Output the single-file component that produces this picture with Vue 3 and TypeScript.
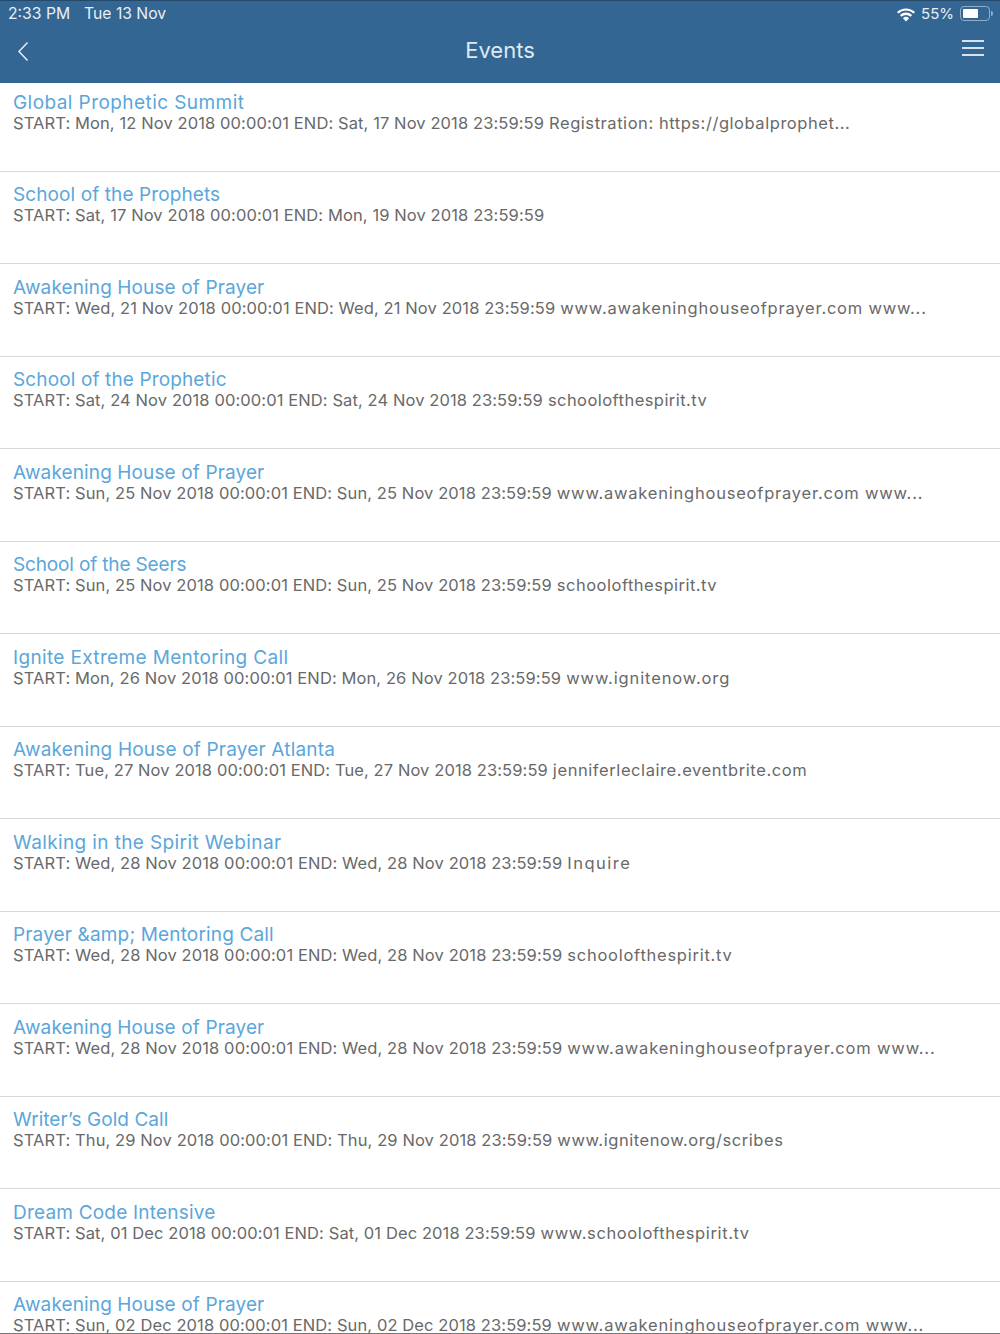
<script setup lang="ts">
interface EventRow {
  title: string;
  when: string;
  extra: string;
  titleTrack: number; // 标题字距
  extraTrack: number; // 链接字距
}

const events: EventRow[] = [
  { title: "Global Prophetic Summit", when: "START: Mon, 12 Nov 2018 00:00:01 END: Sat, 17 Nov 2018 23:59:59", extra: "Registration: https://globalprophet...", titleTrack: 0.43, extraTrack: 0.55 },
  { title: "School of the Prophets", when: "START: Sat, 17 Nov 2018 00:00:01 END: Mon, 19 Nov 2018 23:59:59", extra: "", titleTrack: 0.1, extraTrack: 0 },
  { title: "Awakening House of Prayer", when: "START: Wed, 21 Nov 2018 00:00:01 END: Wed, 21 Nov 2018 23:59:59", extra: "www.awakeninghouseofprayer.com www...", titleTrack: 0.12, extraTrack: 0.78 },
  { title: "School of the Prophetic", when: "START: Sat, 24 Nov 2018 00:00:01 END: Sat, 24 Nov 2018 23:59:59", extra: "schoolofthespirit.tv", titleTrack: 0.13, extraTrack: 0.45 },
  { title: "Awakening House of Prayer", when: "START: Sun, 25 Nov 2018 00:00:01 END: Sun, 25 Nov 2018 23:59:59", extra: "www.awakeninghouseofprayer.com www...", titleTrack: 0.12, extraTrack: 0.78 },
  { title: "School of the Seers", when: "START: Sun, 25 Nov 2018 00:00:01 END: Sun, 25 Nov 2018 23:59:59", extra: "schoolofthespirit.tv", titleTrack: -0.15, extraTrack: 0.5 },
  { title: "Ignite Extreme Mentoring Call", when: "START: Mon, 26 Nov 2018 00:00:01 END: Mon, 26 Nov 2018 23:59:59", extra: "www.ignitenow.org", titleTrack: 0.35, extraTrack: 0.88 },
  { title: "Awakening House of Prayer Atlanta", when: "START: Tue, 27 Nov 2018 00:00:01 END: Tue, 27 Nov 2018 23:59:59", extra: "jenniferleclaire.eventbrite.com", titleTrack: 0.18, extraTrack: 0.58 },
  { title: "Walking in the Spirit Webinar", when: "START: Wed, 28 Nov 2018 00:00:01 END: Wed, 28 Nov 2018 23:59:59", extra: "Inquire", titleTrack: 0.38, extraTrack: 1.5 },
  { title: "Prayer &amp; Mentoring Call", when: "START: Wed, 28 Nov 2018 00:00:01 END: Wed, 28 Nov 2018 23:59:59", extra: "schoolofthespirit.tv", titleTrack: 0.15, extraTrack: 0.75 },
  { title: "Awakening House of Prayer", when: "START: Wed, 28 Nov 2018 00:00:01 END: Wed, 28 Nov 2018 23:59:59", extra: "www.awakeninghouseofprayer.com www...", titleTrack: 0.12, extraTrack: 0.83 },
  { title: "Writer’s Gold Call", when: "START: Thu, 29 Nov 2018 00:00:01 END: Thu, 29 Nov 2018 23:59:59", extra: "www.ignitenow.org/scribes", titleTrack: 0.05, extraTrack: 0.56 },
  { title: "Dream Code Intensive", when: "START: Sat, 01 Dec 2018 00:00:01 END: Sat, 01 Dec 2018 23:59:59", extra: "www.schoolofthespirit.tv", titleTrack: 0.2, extraTrack: 0.62 },
  { title: "Awakening House of Prayer", when: "START: Sun, 02 Dec 2018 00:00:01 END: Sun, 02 Dec 2018 23:59:59", extra: "www.awakeninghouseofprayer.com www...", titleTrack: 0.12, extraTrack: 0.8 },
];
</script>

<template>
  <div class="screen">
    <header class="header">
      <div class="status">
        <span class="clock">2:33 PM</span>
        <span class="date">Tue 13 Nov</span>
        <span class="spacer"></span>
        <svg class="wifi" width="20" height="14" viewBox="0 0 20 14">
          <path d="M10 13.5 6.9 10.2a4.6 4.6 0 0 1 6.2 0Z" fill="#fff" />
          <path d="M5.5 8.7 3.9 7a9 9 0 0 1 12.2 0l-1.600 1.700a6.700 6.700 0 0 0-9 0Z" fill="#fff" />
          <path d="M2.500 5.500 1 3.900a13.300 13.300 0 0 1 18 0l-1.500 1.600a11 11 0 0 0-15 0Z" fill="#fff" />
        </svg>
        <span class="pct">55%</span>
        <span class="battery"><span class="battery-fill"></span></span>
        <span class="battery-cap"></span>
      </div>
      <div class="nav">
        <svg class="back" width="12" height="21" viewBox="0 0 12 21">
          <path d="M10.500 1.500 2 10.500l8.500 9" fill="none" stroke="#e4edf4" stroke-width="1.500" />
        </svg>
        <span class="nav-title">Events</span>
        <span class="menu"><i></i><i></i><i></i></span>
      </div>
    </header>
    <ul class="list">
      <li v-for="(ev, i) in events" :key="i" class="row">
        <div class="title" :style="{ letterSpacing: ev.titleTrack + 'px' }">{{ ev.title }}</div>
        <div class="detail">
          <span class="when">{{ ev.when }}</span>
          <span v-if="ev.extra" class="extra" :style="{ letterSpacing: ev.extraTrack + 'px' }">{{ ev.extra }}</span>
        </div>
      </li>
    </ul>
    <div class="edge"></div>
  </div>
</template>

<style scoped>
.screen {
  position: relative;
  width: 1000px;
  height: 1334px;
  overflow: hidden;
  background: #fff;
  font-family: Inter, "Open Sans", sans-serif;
}
.header {
  height: 83px;
  box-sizing: border-box;
  background: #336693;
  border-top: 1px solid #24496a;
  color: #fff;
}
.status {
  display: flex;
  align-items: center;
  height: 24px;
  padding: 0 7px 0 8px;
  font-size: 15.700px;
  color: #e8eff5;
}
.date {
  margin-left: 14px;
}
.spacer {
  flex: 1;
}
.wifi {
  margin-top: 3px;
  margin-right: 5px;
}
.pct {
  margin-right: 6px;
  font-size: 15px;
}
.battery {
  display: block;
  box-sizing: border-box;
  width: 30px;
  height: 15px;
  padding: 2px;
  border: 1px solid #8fadc6;
  border-radius: 4px;
}
.battery-fill {
  display: block;
  width: 15px;
  height: 100%;
  background: #fff;
  border-radius: 1px;
}
.battery-cap {
  width: 2px;
  height: 5px;
  margin-left: 1px;
  background: #8fadc6;
  border-radius: 0 2px 2px 0;
}
.nav {
  position: relative;
  display: flex;
  align-items: center;
  justify-content: space-between;
  height: 50px;
  padding: 0 16px 0 17px;
}
.back {
  margin-top: 3px;
}
.nav-title {
  position: absolute;
  left: 0;
  right: 0;
  top: 12px;
  text-align: center;
  font-size: 22px;
  line-height: 26px;
  color: #dfe9f1;
}
.menu {
  display: flex;
  flex-direction: column;
  gap: 5px;
  width: 22px;
  margin-top: -4px;
}
.menu i {
  display: block;
  height: 2px;
  background: #d7e3ed;
}
.list {
  list-style: none;
  margin: 0;
  padding: 0;
}
.row {
  box-sizing: border-box;
  height: 92.500px;
  padding: 12.250px 13px 0;
  border-bottom: 1px solid #d8d8d8;
}
.row:first-child {
  height: 88.750px;
  padding-top: 8.500px;
}
.title {
  font-size: 19px;
  line-height: 22px;
  color: #5ba6da;
}
.detail {
  font-size: 16.500px;
  line-height: 19px;
  color: #696969;
  white-space: nowrap;
}
.when {
  letter-spacing: 0.1px;
}
.extra {
  margin-left: 5px;
}
.edge {
  position: absolute;
  left: 0;
  right: 0;
  bottom: 0;
  height: 1px;
  background: #777;
}
</style>

<style>
html,
body {
  margin: 0;
  background: #fff;
}
</style>
